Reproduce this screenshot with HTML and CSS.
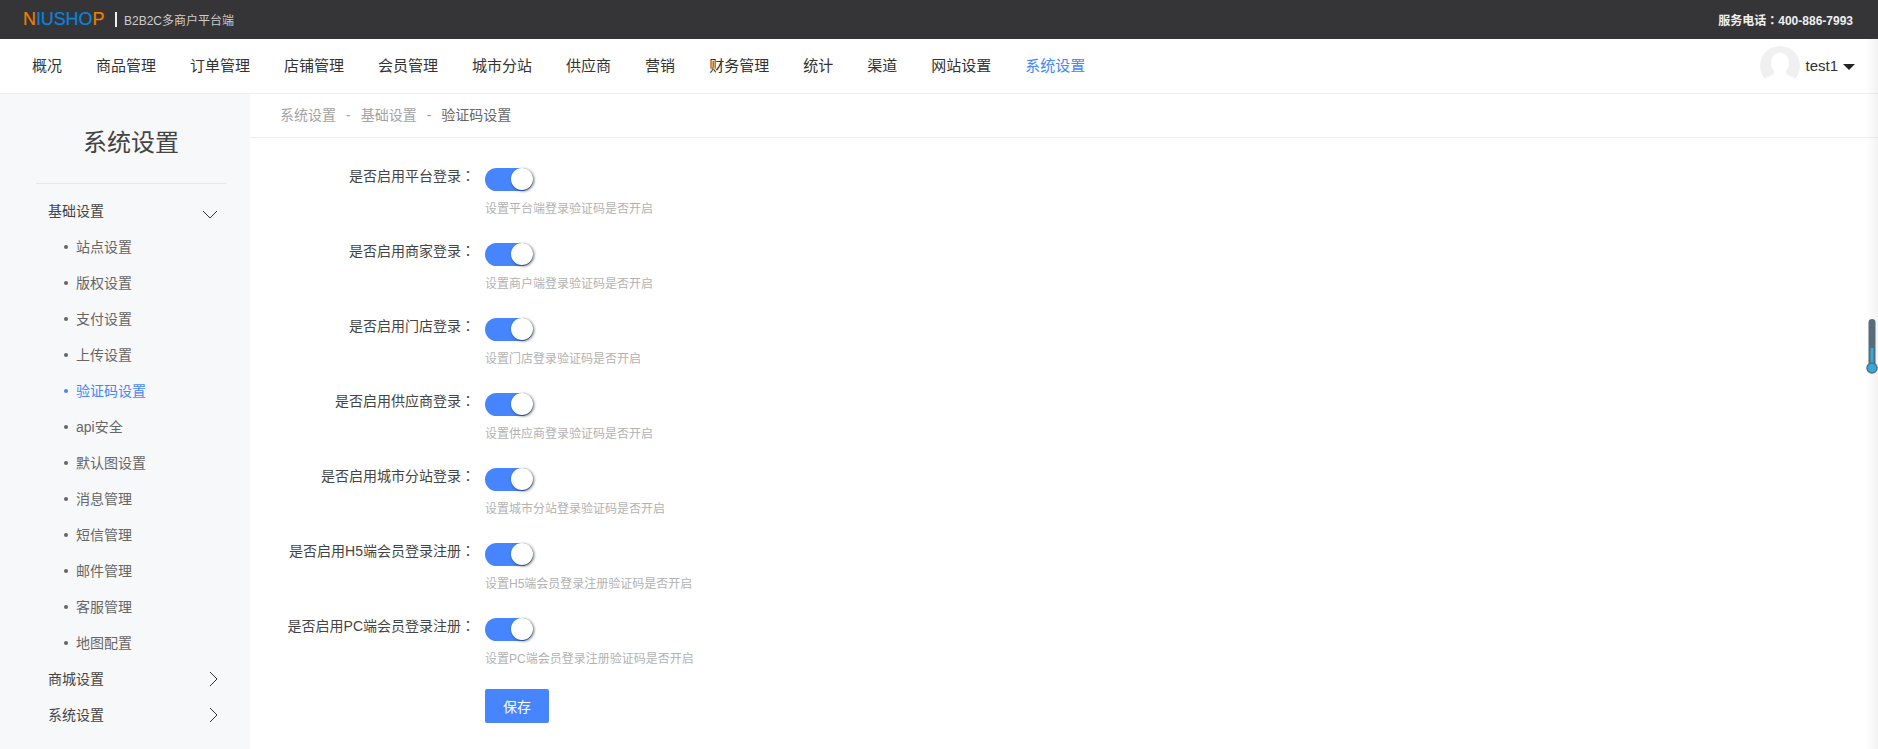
FILE: index.html
```html
<!DOCTYPE html>
<html lang="zh-CN">

<head>
  <meta charset="UTF-8">
  <meta name="viewport" content="width=device-width, initial-scale=1.0">
  <title>验证码设置</title>
  <link rel="stylesheet" href="styles.css">
</head>

<body>

  <div class="topbar">
    <div class="brand">
      <span class="logo"><span class="orange">N</span>IUSHO<span class="orange">P</span></span>
      <span class="brand-line"></span>
      <span class="brand-text">B2B2C多商户平台端</span>
    </div>
    <div class="phone">服务电话<span class="colon" lang="zh-TW">：</span>400-886-7993</div>
  </div>

  <div class="nav">
    <ul class="nav-list">
      <li>概况</li>
      <li>商品管理</li>
      <li>订单管理</li>
      <li>店铺管理</li>
      <li>会员管理</li>
      <li>城市分站</li>
      <li>供应商</li>
      <li>营销</li>
      <li>财务管理</li>
      <li>统计</li>
      <li>渠道</li>
      <li>网站设置</li>
      <li class="active">系统设置</li>
    </ul>
    <div class="user">
      <svg class="avatar" viewBox="0 0 40 40">
        <defs>
          <clipPath id="avatarClip">
            <circle cx="20" cy="20" r="20"></circle>
          </clipPath>
        </defs>
        <circle cx="20" cy="20" r="20" fill="#f0f0f0"></circle>
        <g clip-path="url(#avatarClip)" fill="#fff">
          <ellipse cx="20" cy="17" rx="9" ry="10.5"></ellipse>
          <path d="M15 24h10l2 5c5 1 10 4 12 11H1c2-7 7-10 12-11z"></path>
        </g>
      </svg>
      <span class="user-name">test1</span>
      <span class="caret"></span>
    </div>
  </div>

  <div class="main">
    <div class="side">
      <div class="side-title">系统设置</div>
      <ul class="menu">
        <li class="menu-item">
          基础设置
          <svg class="arrow" viewBox="0 0 14 14"><path d="M0 7l7 7 7-7" fill="none" stroke="#333" stroke-width="1"></path></svg>
        </li>
        <li class="sub-item">站点设置</li>
        <li class="sub-item">版权设置</li>
        <li class="sub-item">支付设置</li>
        <li class="sub-item">上传设置</li>
        <li class="sub-item current">验证码设置</li>
        <li class="sub-item">api安全</li>
        <li class="sub-item">默认图设置</li>
        <li class="sub-item">消息管理</li>
        <li class="sub-item">短信管理</li>
        <li class="sub-item">邮件管理</li>
        <li class="sub-item">客服管理</li>
        <li class="sub-item">地图配置</li>
        <li class="menu-item">
          商城设置
          <svg class="arrow" viewBox="0 0 14 14"><path d="M7 0l7 7-7 7" fill="none" stroke="#333" stroke-width="1"></path></svg>
        </li>
        <li class="menu-item">
          系统设置
          <svg class="arrow" viewBox="0 0 14 14"><path d="M7 0l7 7-7 7" fill="none" stroke="#333" stroke-width="1"></path></svg>
        </li>
      </ul>
    </div>

    <div class="content">
      <div class="crumb">
        <span>系统设置</span><i>-</i><span>基础设置</span><i>-</i><span class="crumb-now">验证码设置</span>
      </div>
      <div class="form">
        <div class="row">
          <label class="label">是否启用平台登录<span class="colon" lang="zh-TW">：</span></label>
          <div class="field"><span class="switch"></span>
            <p class="tip">设置平台端登录验证码是否开启</p>
          </div>
        </div>
        <div class="row">
          <label class="label">是否启用商家登录<span class="colon" lang="zh-TW">：</span></label>
          <div class="field"><span class="switch"></span>
            <p class="tip">设置商户端登录验证码是否开启</p>
          </div>
        </div>
        <div class="row">
          <label class="label">是否启用门店登录<span class="colon" lang="zh-TW">：</span></label>
          <div class="field"><span class="switch"></span>
            <p class="tip">设置门店登录验证码是否开启</p>
          </div>
        </div>
        <div class="row">
          <label class="label">是否启用供应商登录<span class="colon" lang="zh-TW">：</span></label>
          <div class="field"><span class="switch"></span>
            <p class="tip">设置供应商登录验证码是否开启</p>
          </div>
        </div>
        <div class="row">
          <label class="label">是否启用城市分站登录<span class="colon" lang="zh-TW">：</span></label>
          <div class="field"><span class="switch"></span>
            <p class="tip">设置城市分站登录验证码是否开启</p>
          </div>
        </div>
        <div class="row">
          <label class="label">是否启用H5端会员登录注册<span class="colon" lang="zh-TW">：</span></label>
          <div class="field"><span class="switch"></span>
            <p class="tip">设置H5端会员登录注册验证码是否开启</p>
          </div>
        </div>
        <div class="row last">
          <label class="label">是否启用PC端会员登录注册<span class="colon" lang="zh-TW">：</span></label>
          <div class="field"><span class="switch"></span>
            <p class="tip">设置PC端会员登录注册验证码是否开启</p>
          </div>
        </div>
        <button class="btn">保存</button>
      </div>
    </div>
  </div>

  <div class="edge"></div>
  <svg class="thermo" viewBox="0 0 12 60">
    <rect x="2.5" y="1" width="7" height="48" rx="3.5" fill="#5a6b78"></rect>
    <rect x="4.5" y="30" width="3" height="18" fill="#35a8dc"></rect>
    <circle cx="6" cy="50" r="5" fill="#35a8dc" stroke="#56707f" stroke-width="1.5"></circle>
  </svg>

</body>

</html>
```

FILE: styles.css
```css
* {
  margin: 0;
  padding: 0;
  list-style: none;
  box-sizing: border-box;
}

html,
body {
  height: 749px;
  overflow: hidden;
}

body {
  position: relative;
  font-family: "Liberation Sans", "Noto Sans CJK SC", sans-serif;
  font-size: 14px;
  color: #333;
  background: #fff;
}

/* the full width colon sits in the middle of its box in the TC cut */
.colon {
  font-family: "Noto Sans CJK TC", sans-serif;
}

.topbar {
  height: 39px;
  padding: 0 23px;
  background: #353537;
  display: flex;
  align-items: center;
  justify-content: space-between;
}

.brand {
  display: flex;
  align-items: center;
}

.logo {
  width: 81px;
  font-size: 18px;
  letter-spacing: -0.1px;
  -webkit-text-stroke: 0.2px;
  color: #0a84dc;
  white-space: nowrap;
}

.orange {
  color: #ef7d00;
}

.brand-line {
  width: 2px;
  height: 15px;
  margin: 0 7px 0 11px;
  background: #eee;
}

.brand-text {
  font-size: 12px;
  color: #ccc;
}

.phone {
  font-size: 12px;
  font-weight: bold;
  color: #eee;
  margin-right: 2px;
}

.nav {
  height: 55px;
  padding: 0 23px 4px 32px;
  border-bottom: 1px solid #eee;
  display: flex;
  align-items: center;
  justify-content: space-between;
}

.nav-list {
  display: flex;
  gap: 34px;
  font-size: 15px;
  color: #333;
}

.nav-list .active {
  color: #4685fd;
}

.user {
  display: flex;
  align-items: center;
  margin-top: 4px;
}

.avatar {
  width: 40px;
  height: 40px;
  margin-right: 5px;
}

.user-name {
  font-size: 15px;
  margin-bottom: 2px;
}

.caret {
  margin: 2px 0 0 5px;
  border-style: solid;
  border-width: 6px 6px 0;
  border-color: #222 transparent transparent;
}

.main {
  display: flex;
  height: 655px;
}

.side {
  width: 250px;
  flex-shrink: 0;
  background: #f7f8fa;
}

.side-title {
  width: 190px;
  height: 90px;
  margin-left: 36px;
  border-bottom: 1px solid #e5e7ea;
  text-align: center;
  line-height: 98px;
  font-size: 24px;
  color: #444;
}

.menu {
  margin-top: 9px;
}

.menu-item {
  position: relative;
  height: 36px;
  line-height: 36px;
  padding-left: 48px;
  color: #444;
}

.arrow {
  position: absolute;
  left: 203px;
  top: 11px;
  width: 14px;
  height: 14px;
  overflow: visible;
}

.sub-item {
  position: relative;
  height: 36px;
  line-height: 36px;
  padding-left: 76px;
  color: #666;
}

.sub-item::before {
  content: "";
  position: absolute;
  left: 64px;
  top: 16px;
  width: 4px;
  height: 4px;
  border-radius: 50%;
  background: #666;
}

.sub-item.current {
  color: #4685fd;
}

.sub-item.current::before {
  background: #4685fd;
}

.content {
  flex: 1;
}

.crumb {
  height: 44px;
  line-height: 42px;
  padding-left: 30px;
  border-bottom: 1px solid #eee;
  color: #a3a3a3;
}

.crumb i {
  font-style: normal;
  margin: 0 10px;
}

.crumb-now {
  color: #666;
}

.form {
  padding-top: 30px;
}

.row {
  display: flex;
  height: 75px;
}

.row.last {
  height: 71px;
}

.label {
  width: 225px;
  margin-right: 10px;
  text-align: right;
  line-height: 14px;
  color: #444;
}

.switch {
  display: block;
  position: relative;
  width: 48px;
  height: 23px;
  border-radius: 12px;
  background: #4685fd;
}

.switch::after {
  content: "";
  position: absolute;
  right: 0;
  top: 0;
  width: 22px;
  height: 22px;
  border-radius: 50%;
  background: #fff;
  box-shadow: 1px 1px 3px rgba(0, 0, 0, 0.6);
}

.tip {
  margin-top: 8px;
  font-size: 12px;
  color: #b2b2b2;
}

.btn {
  display: block;
  width: 64px;
  height: 34px;
  margin-left: 235px;
  border: 0;
  border-radius: 2px;
  font-family: inherit;
  font-size: 14px;
  color: #fff;
  background: #4685fd;
}

.edge {
  position: absolute;
  right: 0;
  top: 39px;
  bottom: 0;
  width: 12px;
  background: linear-gradient(to right, rgba(0, 0, 0, 0), rgba(0, 0, 0, 0.05));
}

.thermo {
  position: absolute;
  right: 0;
  top: 318px;
  width: 12px;
  height: 60px;
}
```
